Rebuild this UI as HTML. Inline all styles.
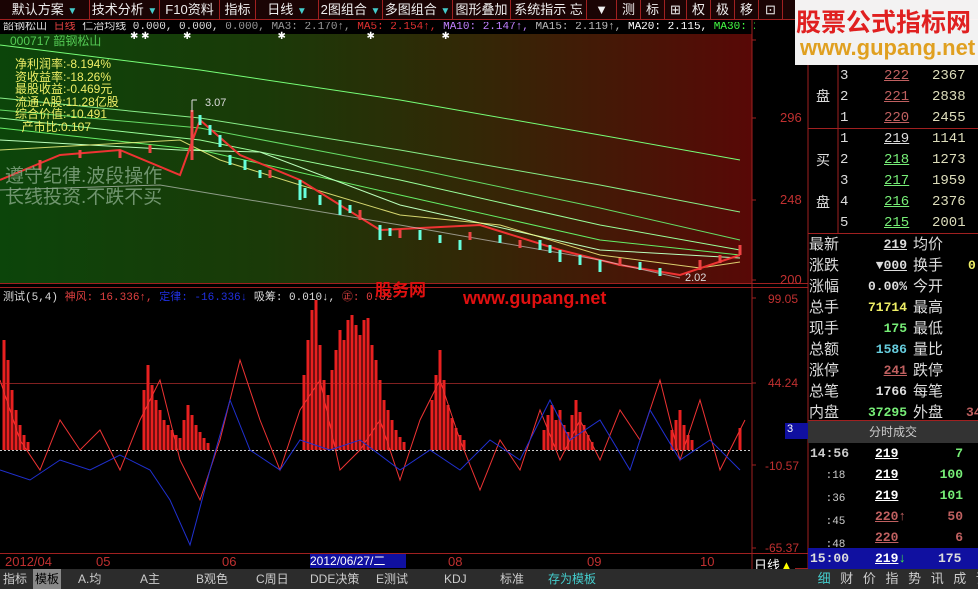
<!DOCTYPE html>
<html><head><meta charset="utf-8"><style>
*{margin:0;padding:0;box-sizing:border-box}
body{width:978px;height:589px;background:#000;overflow:hidden;position:relative;font-family:"Liberation Sans","Noto Sans CJK SC",sans-serif;font-size:12px;color:#ddd}
.a{position:absolute;white-space:nowrap}
.tb{position:absolute;top:0;height:20px;border-right:1px solid #a02020;color:#eee;font-size:13px;line-height:20px;text-align:center}
.tri{color:#4cc;font-size:10px}
.rp{position:absolute;font-size:14px;line-height:21px}
.m{font-family:"Liberation Mono","Noto Sans CJK SC",monospace}
u{text-decoration:underline}
</style></head><body>
<div class="a" style="left:0;top:0;width:978px;height:20px;background:#1a0404;border-bottom:1px solid #a02020"></div>
<div class="tb" style="left:0;width:90px">默认方案 <span class="tri">▼</span></div>
<div class="tb" style="left:90px;width:70px">技术分析 <span class="tri">▼</span></div>
<div class="tb" style="left:160px;width:60px">F10资料</div>
<div class="tb" style="left:220px;width:36px">指标</div>
<div class="tb" style="left:256px;width:63px">日线 <span class="tri">▼</span></div>
<div class="tb" style="left:319px;width:64px">2图组合 <span class="tri">▼</span></div>
<div class="tb" style="left:383px;width:70px">多图组合 <span class="tri">▼</span></div>
<div class="tb" style="left:453px;width:58px">图形叠加</div>
<div class="tb" style="left:511px;width:76px">系统指示 忘</div>
<div class="tb" style="left:587px;width:30px">▼</div>
<div class="tb" style="left:617px;width:24px">测</div>
<div class="tb" style="left:641px;width:24px">标</div>
<div class="tb" style="left:665px;width:22px">⊞</div>
<div class="tb" style="left:687px;width:24px">权</div>
<div class="tb" style="left:711px;width:24px">极</div>
<div class="tb" style="left:735px;width:24px">移</div>
<div class="tb" style="left:759px;width:24px">⊡</div>
<div class="a m" style="left:3px;top:22px;height:11px;font-size:11px;line-height:11px;color:#ddd;width:752px;overflow:hidden">韶钢松山 <span style="color:#e04040">日线</span> 仁治均线 0.000, 0.000, <span style="color:#999">0.000, MA3: 2.170↑,</span> <span style="color:#e03030">MA5: 2.154↑,</span> <span style="color:#c080ff">MA10: 2.147↑,</span> <span style="color:#bbb">MA15: 2.119↑,</span> <span style="color:#fff">MA20: 2.115,</span> <span style="color:#4f4">MA30: 2.125↑,</span> <span style="color:#aaa">MA4</span></div>
<div class="a" style="left:0;top:34px;width:752px;height:249px;background:linear-gradient(90deg,#0c450a 0%,#1a3a08 35%,#352606 65%,#580806 100%)"></div>
<svg class="a" style="left:0;top:0" width="978" height="589">
<g fill="none" stroke-width="1">
<path d="M0 45 L200 70 L400 100 L600 135 L740 160" stroke="#7f7"/>
<path d="M0 98 L200 118 L400 150 L600 185 L740 212" stroke="#8e8"/>
<path d="M0 110 L200 128 L420 170 L600 208 L740 240" stroke="#6d6"/>
<path d="M0 118 L200 140 L400 180 L600 225 L740 250" stroke="#9f9"/>
<path d="M0 128 L200 150 L400 195 L600 240 L740 255" stroke="#6e6"/>
<path d="M0 140 L180 150 L260 152 L400 205 L600 250 L740 258" stroke="#bfb"/>
<path d="M0 150 L180 140 L220 160 L300 185 L400 215 L500 225 L600 255 L700 268 L740 262" stroke="#ff8" opacity=".8"/>
<path d="M0 180 L60 155 L120 150 L180 175 L200 120 L240 155 L300 180 L380 230 L480 225 L560 250 L620 265 L680 275 L740 255" stroke="#e33" stroke-width="2"/>
<path d="M0 190 L160 185 L400 225 L600 260 L680 278" stroke="#ddd" opacity=".6"/>
</g>
<g stroke="#6fd" stroke-width="3">
<path d="M200 115v10M210 125v10M220 135v12M230 155v10M245 160v10M260 170v8M300 180v20M305 188v10M320 195v10M340 200v15M350 205v8M380 225v15M390 228v8M420 230v10M440 235v8M460 240v10M500 235v8M540 240v10M550 245v8M560 250v12M580 255v10M600 260v12M640 262v8M660 268v8"/>
</g>
<g stroke="#e44" stroke-width="3">
<path d="M192 110v50M40 160v10M80 150v8M120 150v8M150 145v8M270 170v8M360 210v10M400 230v8M470 232v8M520 240v8M620 258v8M700 260v10M720 255v8M740 245v10"/>
</g>
<path d="M192 100v12M192 100l5 0" stroke="#ddd" fill="none"/>
<path d="M0 283.5H808M0 287.5H808M0 553.5H808M752 20v550M808 20v570M795 568.5H808" stroke="#a02020" fill="none"/>
<path d="M0 383.5H752" stroke="#802020" fill="none"/>
<path d="M0 450.5H752" stroke="#ccc" stroke-dasharray="2 2"/>
<path d="M752 40h4M752 118h4M752 200h4M752 280h4M752 298h4M752 383h4M752 465h4M752 548h4" stroke="#a02020"/>
<g stroke="#e82020" stroke-width="3"><path d="M4 450V340M8 450V360M12 450V390M16 450V410M20 450V425M24 450V435M28 450V442M144 450V390M148 450V365M152 450V385M156 450V400M160 450V410M164 450V420M168 450V425M172 450V430M176 450V435M180 450V438M184 450V420M188 450V405M192 450V415M196 450V425M200 450V432M204 450V438M208 450V443M304 450V375M308 450V340M312 450V310M316 450V300M320 450V345M324 450V380M328 450V395M332 450V370M336 450V350M340 450V330M344 450V340M348 450V320M352 450V315M356 450V325M360 450V335M364 450V320M368 450V318M372 450V345M376 450V360M380 450V380M384 450V400M388 450V410M392 450V420M396 450V430M400 450V437M404 450V442M432 450V400M436 450V375M440 450V350M444 450V380M448 450V405M452 450V418M456 450V428M460 450V435M464 450V440M544 450V430M548 450V415M552 450V405M556 450V420M560 450V410M564 450V425M568 450V432M572 450V415M576 450V400M580 450V412M584 450V425M588 450V435M592 450V442M672 450V430M676 450V420M680 450V410M684 450V425M688 450V435M692 450V440M740 450V428"/></g>
<path d="M0 380 L20 440 L40 470 L60 420 L80 450 L100 430 L120 470 L140 420 L160 380 L180 460 L200 500 L220 440 L240 360 L260 420 L280 470 L300 410 L320 380 L340 470 L360 450 L380 420 L400 480 L420 420 L440 380 L460 440 L480 490 L500 440 L520 470 L540 410 L560 460 L580 420 L600 460 L620 410 L640 440 L660 380 L680 460 L700 400 L720 470 L745 420" stroke="#e33" fill="none"/>
<path d="M0 470 L30 480 L60 460 L90 470 L120 455 L150 470 L170 500 L190 545 L210 470 L230 400 L250 450 L280 470 L300 440 L330 450 L360 440 L400 470 L430 450 L460 470 L490 440 L520 460 L550 400 L570 440 L600 420 L630 470 L650 410 L680 460 L710 440 L740 470" stroke="#2030d0" fill="none"/>
</svg>
<div class="a" style="left:10px;top:32px;color:#5c5;font-size:12px">000717 韶钢松山</div>
<div class="a" style="left:15px;top:58px;color:#ee6;font-size:12px;line-height:12.5px">净利润率:-8.194%<br>资收益率:-18.26%<br>最股收益:-0.469元<br>流通.A股:11.28亿股<br>综合价值:-10.491<br>&nbsp;&nbsp;产市比:0.107</div>
<div class="a" style="left:5px;top:166px;color:#8a8;font-size:19px;line-height:21px;opacity:.8">遵守纪律.波段操作<br>长线投资.不跌不买</div>
<div class="a" style="left:205px;top:97px;color:#ddd;font-size:11px">3.07</div>
<div class="a" style="left:685px;top:272px;color:#ddd;font-size:11px">2.02</div>
<div class="a" style="left:130px;top:31px;color:#fff;font-size:10px">✱ ✱</div>
<div class="a" style="left:183px;top:31px;color:#fff;font-size:10px">✱&nbsp;&nbsp;&nbsp;&nbsp;&nbsp;&nbsp;&nbsp;&nbsp;&nbsp;&nbsp;&nbsp;&nbsp;&nbsp;&nbsp;&nbsp;&nbsp;&nbsp;&nbsp;&nbsp;&nbsp;&nbsp;&nbsp;&nbsp;&nbsp;&nbsp;&nbsp;&nbsp;&nbsp;&nbsp;&nbsp;&nbsp;✱&nbsp;&nbsp;&nbsp;&nbsp;&nbsp;&nbsp;&nbsp;&nbsp;&nbsp;&nbsp;&nbsp;&nbsp;&nbsp;&nbsp;&nbsp;&nbsp;&nbsp;&nbsp;&nbsp;&nbsp;&nbsp;&nbsp;&nbsp;&nbsp;&nbsp;&nbsp;&nbsp;&nbsp;&nbsp;✱&nbsp;&nbsp;&nbsp;&nbsp;&nbsp;&nbsp;&nbsp;&nbsp;&nbsp;&nbsp;&nbsp;&nbsp;&nbsp;&nbsp;&nbsp;&nbsp;&nbsp;&nbsp;&nbsp;&nbsp;&nbsp;&nbsp;&nbsp;&nbsp;✱</div>
<div class="a" style="left:780px;top:110px;color:#c03030;font-size:13px">296</div>
<div class="a" style="left:780px;top:192px;color:#c03030;font-size:13px">248</div>
<div class="a" style="left:780px;top:272px;color:#c03030;font-size:13px">200</div>
<div class="a" style="left:768px;top:292px;color:#c03030;font-size:12px">99.05</div>
<div class="a" style="left:768px;top:376px;color:#c03030;font-size:12px">44.24</div>
<div class="a" style="left:765px;top:459px;color:#c03030;font-size:12px">-10.57</div>
<div class="a" style="left:765px;top:541px;color:#c03030;font-size:12px">-65.37</div>
<div class="a" style="left:785px;top:423px;width:23px;height:16px;background:#1010a0;color:#fff;font-size:11px;padding-left:2px">3</div>
<div class="a m" style="left:3px;top:288px;font-size:11px;color:#ddd">测试(5,4) <span style="color:#e04040">神风: 16.336↑,</span> <span style="color:#2030e0">定律: -16.336↓</span> 吸筹: 0.010↓, <span style="color:#e04040">㊣: 0.02</span></div>
<div class="a" style="left:375px;top:276px;color:#e01010;font-size:17px;font-weight:bold">股务网</div>
<div class="a" style="left:463px;top:288px;color:#e01010;font-size:18px;font-weight:bold">www.gupang.net</div>
<div class="a" style="left:5px;top:554px;color:#c03030;font-size:13px">2012/04</div>
<div class="a" style="left:96px;top:554px;color:#c03030;font-size:13px">05</div>
<div class="a" style="left:222px;top:554px;color:#c03030;font-size:13px">06</div>
<div class="a" style="left:310px;top:554px;width:96px;height:14px;background:#1010a0;color:#fff;font-size:12px;line-height:14px">2012/06/27/二</div>
<div class="a" style="left:448px;top:554px;color:#c03030;font-size:13px">08</div>
<div class="a" style="left:587px;top:554px;color:#c03030;font-size:13px">09</div>
<div class="a" style="left:700px;top:554px;color:#c03030;font-size:13px">10</div>
<div class="a" style="left:754px;top:555px;color:#fff;font-size:13px">日线<span style="color:#ff0">▲</span></div>
<div class="a" style="left:0;top:569px;width:808px;height:20px;background:#2c2c2c;color:#ccc;font-size:12px;line-height:20px">
<span class="a" style="left:3px">指标</span><span class="a" style="left:33px;background:#888;color:#000;padding:0 2px">模板</span><span class="a" style="left:78px">A.均</span><span class="a" style="left:140px">A主</span><span class="a" style="left:196px">B观色</span><span class="a" style="left:256px">C周日</span><span class="a" style="left:310px">DDE决策</span><span class="a" style="left:376px">E测试</span><span class="a" style="left:444px">KDJ</span><span class="a" style="left:500px">标准</span><span class="a" style="left:548px;color:#4cc">存为模板</span></div>
<div class="a" style="left:795px;top:0;width:183px;height:65px;background:#fff;opacity:.95"></div>
<div class="a" style="left:796px;top:5px;color:#e02020;font-size:25px;font-weight:bold;font-family:'Noto Sans CJK SC',sans-serif;line-height:32px">股票公式指标网</div>
<div class="a" style="left:800px;top:36px;color:#e0a020;font-size:22px;font-weight:bold;line-height:24px">www.gupang.net</div>
<svg class="a" style="left:808px;top:0" width="170" height="589"><path d="M0 128.5H170M0 233.5H170M0 420.5H170M30 65v168" stroke="#a02020"/></svg>
<div class="rp" style="left:816px;top:86px">盘</div>
<div class="rp" style="left:816px;top:150px">买</div>
<div class="rp" style="left:816px;top:192px">盘</div>
<div class="rp m" style="left:840px;top:66px;line-height:21px;color:#ddd">3<br>2<br>1</div>
<div class="rp m" style="left:884px;top:66px;line-height:21px;color:#c06060"><u>222</u><br><u>221</u><br><u>220</u></div>
<div class="rp m" style="left:932px;top:66px;line-height:21px;color:#ddb">2367<br>2838<br>2455</div>
<div class="rp m" style="left:840px;top:129px;line-height:21px;color:#ddd">1<br>2<br>3<br>4<br>5</div>
<div class="rp m" style="left:884px;top:129px;line-height:21px;color:#7e7"><u style="color:#ddd">219</u><br><u>218</u><br><u>217</u><br><u>216</u><br><u>215</u></div>
<div class="rp m" style="left:932px;top:129px;line-height:21px;color:#ddb">1141<br>1273<br>1959<br>2376<br>2001</div>
<div class="rp" style="left:809px;top:234px;line-height:21px;font-size:15px;color:#ddd">最新<br>涨跌<br>涨幅<br>总手<br>现手<br>总额<br>涨停<br>总笔<br>内盘</div>
<div class="rp" style="left:913px;top:234px;line-height:21px;font-size:15px;color:#ddd">均价<br>换手<br>今开<br>最高<br>最低<br>量比<br>跌停<br>每笔<br>外盘</div>
<div class="rp m" style="left:850px;top:234px;width:57px;text-align:right;line-height:21px;font-size:13px;font-weight:bold">
<span style="color:#ddd"><u>219</u></span><br><span style="color:#ddd">▼<u>000</u></span><br><span style="color:#ddd">0.00%</span><br><span style="color:#ee6">71714</span><br><span style="color:#7e7">175</span><br><span style="color:#6cd">1586</span><br><span style="color:#c06060"><u>241</u></span><br><span style="color:#ddd">1766</span><br><span style="color:#7e7">37295</span></div>
<div class="rp m" style="left:968px;top:255px;color:#ee6;font-size:13px;font-weight:bold">0.</div>
<div class="rp m" style="left:966px;top:402px;color:#c06060;font-size:13px;font-weight:bold">34</div>
<div class="a" style="left:808px;top:421px;width:170px;height:22px;background:#333;color:#ccc;text-align:center;line-height:22px;font-size:12px">分时成交</div>
<div class="rp m" style="left:810px;top:443px;line-height:21px;font-size:13px;font-weight:bold;color:#ccc">14:56<br>&nbsp;&nbsp;<span style="font-weight:normal;font-size:11px">:18</span><br>&nbsp;&nbsp;<span style="font-weight:normal;font-size:11px">:36</span><br>&nbsp;&nbsp;<span style="font-weight:normal;font-size:11px">:45</span><br>&nbsp;&nbsp;<span style="font-weight:normal;font-size:11px">:48</span></div>
<div class="rp m" style="left:875px;top:443px;line-height:21px;font-size:13px;font-weight:bold;color:#fff"><u>219</u><br><u>219</u><br><u>219</u><br><span style="color:#c06060"><u>220</u>↑</span><br><span style="color:#c06060"><u>220</u></span></div>
<div class="rp m" style="left:925px;top:443px;width:38px;text-align:right;line-height:21px;font-size:13px;font-weight:bold;color:#7e7">7<br>100<br>101<br><span style="color:#c06060">50</span><br><span style="color:#c06060">6</span></div>
<div class="a m" style="left:808px;top:548px;width:170px;height:21px;background:#1010a0;color:#ddd;font-size:13px;font-weight:bold;line-height:21px"><span class="a" style="left:2px">15:00</span><span class="a" style="left:67px;color:#fff"><u>219</u><span style="color:#4e4">↓</span></span><span class="a" style="left:130px">175</span></div>
<div class="a" style="left:808px;top:569px;width:170px;height:20px;background:#2c2c2c;color:#ccc;font-size:13px;line-height:20px;word-spacing:6px">&nbsp;<span style="color:#4cc">细</span> 财 价 指 势 讯 成 评</div>
</body></html>
